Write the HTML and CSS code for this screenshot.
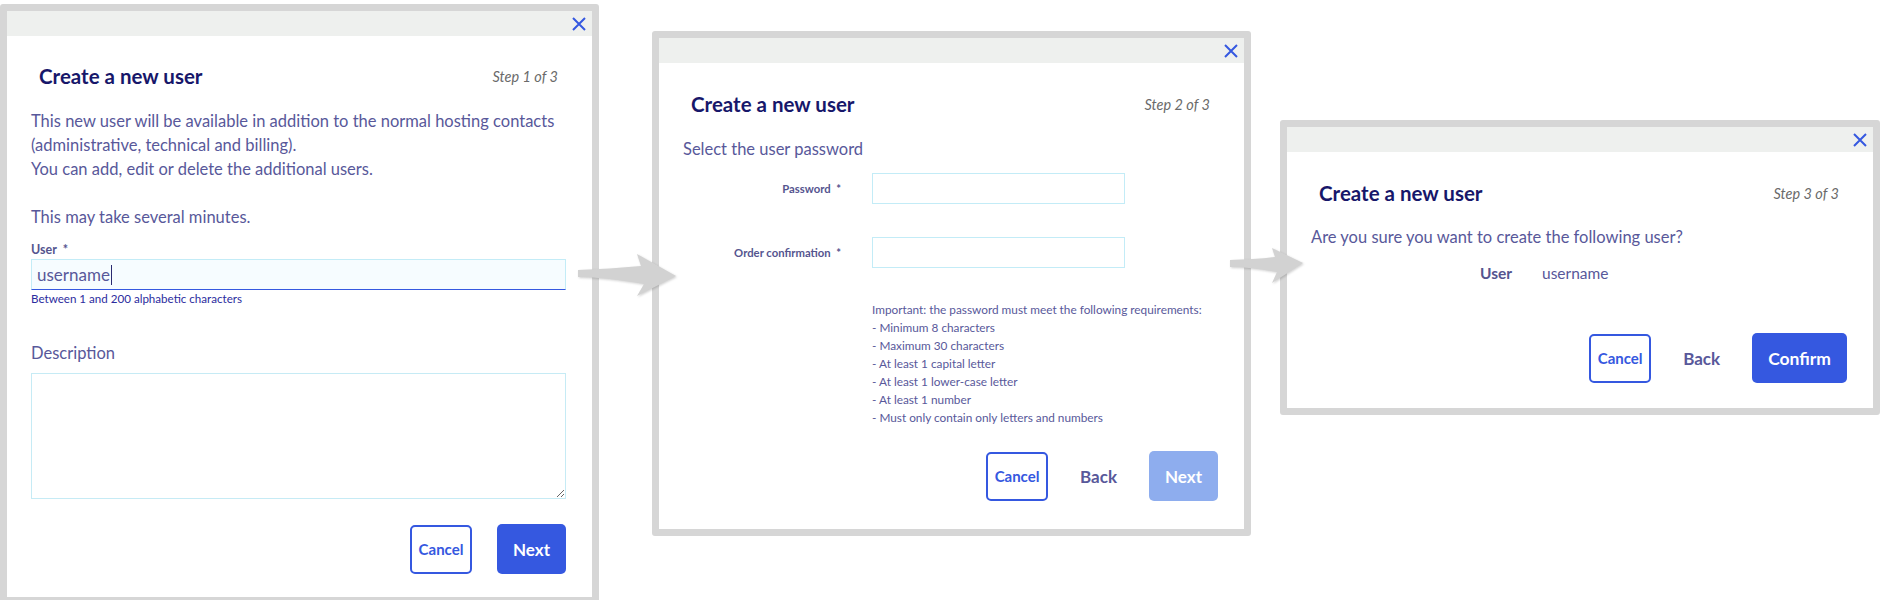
FILE: index.html
```html
<!DOCTYPE html>
<html lang="en">
<head>
<meta charset="utf-8">
<title>Create a new user</title>
<link rel="stylesheet" href="styles.css">
</head>
<body>
<div class="canvas">
  <section class="modal modal-1">
    <div class="modal-head">
      <svg class="close" viewBox="0 0 14 14" width="14" height="14"><path d="M1 1L13 13M13 1L1 13" stroke="#3558e0" stroke-width="2" fill="none"/></svg>
    </div>
    <div class="modal-body">
      <div class="title-row"><h2 class="title">Create a new user</h2><span class="step">Step 1 of 3</span></div>
      <p class="text intro">This new user will be available in addition to the normal hosting contacts<br>(administrative, technical and billing).<br>You can add, edit or delete the additional users.<br><br>This may take several minutes.</p>
      <div class="label-top">User&nbsp; *</div>
      <div class="input active"><span class="value">username</span><span class="caret"></span></div>
      <div class="helper">Between 1 and 200 alphabetic characters</div>
      <div class="text desc-label">Description</div>
      <textarea class="area"></textarea>
      <div class="actions a1">
        <button class="btn btn-outline">Cancel</button>
        <button class="btn btn-primary">Next</button>
      </div>
    </div>
  </section>

  <section class="modal modal-2">
    <div class="modal-head">
      <svg class="close" viewBox="0 0 14 14" width="14" height="14"><path d="M1 1L13 13M13 1L1 13" stroke="#3558e0" stroke-width="2" fill="none"/></svg>
    </div>
    <div class="modal-body">
      <div class="title-row"><h2 class="title">Create a new user</h2><span class="step">Step 2 of 3</span></div>
      <p class="text sub">Select the user password</p>
      <div class="form-row r1"><label class="label-side">Password&nbsp; *</label><div class="input small"></div></div>
      <div class="form-row r2"><label class="label-side">Order confirmation&nbsp; *</label><div class="input small"></div></div>
      <div class="rules">Important: the password must meet the following requirements:<br>- Minimum 8 characters<br>- Maximum 30 characters<br>- At least 1 capital letter<br>- At least 1 lower-case letter<br>- At least 1 number<br>- Must only contain only letters and numbers</div>
      <div class="actions a2">
        <button class="btn btn-outline">Cancel</button>
        <button class="btn btn-link">Back</button>
        <button class="btn btn-primary disabled">Next</button>
      </div>
    </div>
  </section>

  <section class="modal modal-3">
    <div class="modal-head">
      <svg class="close" viewBox="0 0 14 14" width="14" height="14"><path d="M1 1L13 13M13 1L1 13" stroke="#3558e0" stroke-width="2" fill="none"/></svg>
    </div>
    <div class="modal-body">
      <div class="title-row"><h2 class="title">Create a new user</h2><span class="step">Step 3 of 3</span></div>
      <p class="text sub3">Are you sure you want to create the following user?</p>
      <div class="summary"><span class="sum-label">User</span><span class="sum-value">username</span></div>
      <div class="actions a3">
        <button class="btn btn-outline">Cancel</button>
        <button class="btn btn-link">Back</button>
        <button class="btn btn-primary">Confirm</button>
      </div>
    </div>
  </section>

  <svg class="arrow arrow-1" viewBox="0 0 105 50" width="105" height="50"><path d="M3 20 C25 19 45 18 66 16 L62 4 L101 26 L62 46 L69 34 C45 30 22 27 3 27 Z"/></svg>
  <svg class="arrow arrow-2" viewBox="0 0 82 42" width="82" height="42"><path d="M5 15 C20 14 35 14 50 12 L47 3 L78 18 L47 38 L52 27 C35 24 20 22 5 22 Z"/></svg>
</div>
</body>
</html>
```
FILE: styles.css
```css
* { box-sizing: border-box; }
html, body { margin: 0; padding: 0; background: #ffffff; }
body {
  width: 1890px;
  height: 600px;
  overflow: hidden;
  font-family: Lato, "Open Sans", sans-serif;
  color: #58589a;
}
.canvas {
  position: relative;
  display: flex;
  align-items: flex-start;
  width: 1890px;
  height: 600px;
}
.modal {
  width: 599px;
  border: 7px solid #d6d6d6;
  border-radius: 3px;
  background: #fff;
  flex: none;
}
.modal-1 { margin-top: 4px; height: 600px; }
.modal-2 { margin-top: 31px; margin-left: 53px; }
.modal-3 { margin-top: 120px; margin-left: 29px; width: 600px; }

.modal-head {
  height: 25px;
  background: #eef0ee;
  display: flex;
  justify-content: flex-end;
  align-items: center;
  padding-right: 6px;
}
.close { display: block; }

.modal-body {
  padding: 28px 26px 0 24px;
}
.modal-2 .modal-body, .modal-3 .modal-body { padding-top: 29px; }

.title-row {
  display: flex;
  justify-content: space-between;
  align-items: center;
  height: 24px;
  padding: 0 8px;
}
.title {
  margin: 0;
  font-size: 20.5px;
  font-weight: 700;
  color: #17176a;
  line-height: 24px;
}
.step {
  font-style: italic;
  font-size: 14.5px;
  color: #6a6a6a;
}
.text {
  margin: 0;
  font-size: 16.5px;
  line-height: 24px;
  color: #58589a;
}
.intro { margin-top: 21px; }
.label-top {
  margin-top: 13px;
  font-size: 12.5px;
  font-weight: 700;
  line-height: 16px;
  color: #55558f;
}
.input {
  height: 31px;
  background: #f6fcff;
  border: 1px solid #c3ecf7;
  display: flex;
  align-items: center;
  padding-left: 5px;
}
.input.active {
  margin-top: 1px;
  border-bottom: 1px solid #3558e0;
}
.input .value {
  font-size: 17px;
  color: #58589a;
}
.caret {
  display: inline-block;
  width: 1px;
  height: 20px;
  background: #2a2a70;
  margin-left: 1px;
}
.helper {
  margin-top: 2px;
  font-size: 11.6px;
  line-height: 14px;
  color: #2c2c9e;
}
.desc-label { margin-top: 35px; }
.area {
  display: block;
  margin-top: 8px;
  width: 100%;
  height: 126px;
  border: 1px solid #c6ebf5;
  background: #fff;
  resize: vertical;
  font: inherit;
}
.actions {
  display: flex;
  justify-content: flex-end;
  align-items: center;
  gap: 25px;
}
.a1 { margin-top: 25px; }
.a2 { margin-top: 24px; padding-bottom: 28px; }
.a3 { margin-top: 50px; padding-bottom: 25px; }
.btn {
  font-family: Lato, "Open Sans", sans-serif;
  font-weight: 700;
  border-radius: 5px;
  cursor: pointer;
}
.btn-outline {
  width: 62px;
  height: 49px;
  border: 2px solid #3558e0;
  background: #fff;
  color: #3558e0;
  font-size: 15px;
  padding: 0;
}
.btn-primary {
  height: 50px;
  padding: 0 16px;
  border: none;
  background: #3558e0;
  color: #fff;
  font-size: 17px;
}
.modal-3 .btn-primary { padding: 0 16px; font-size: 17.5px; }
.btn-primary.disabled { background: #8eadee; }
.btn-link {
  height: 49px;
  border: none;
  background: transparent;
  color: #58589a;
  font-size: 17px;
  padding: 0 7px;
}

.sub { margin-top: 21px; }
.form-row {
  display: grid;
  grid-template-columns: 158px 253px;
  column-gap: 31px;
  align-items: center;
}
.r1 { margin-top: 12px; }
.r2 { margin-top: 33px; }
.label-side {
  text-align: right;
  font-size: 11.3px;
  font-weight: 700;
  color: #55558f;
}
.input.small { background: #fff; }
.rules {
  margin-top: 33px;
  margin-left: 189px;
  font-size: 11.8px;
  line-height: 18px;
  color: #58589a;
}

.sub3 { margin-top: 20px; }
.summary {
  margin-top: 14px;
  display: grid;
  grid-template-columns: 201px auto;
  column-gap: 30px;
  line-height: 20px;
}
.sum-label {
  text-align: right;
  font-weight: 700;
  font-size: 15.5px;
  color: #55558f;
}
.sum-value {
  font-size: 15.5px;
  color: #58589a;
}

.arrow {
  position: absolute;
  fill: #d2d2d2;
  filter: drop-shadow(1px 1px 1px rgba(0,0,0,0.18));
}
.arrow-1 { left: 575px; top: 250px; }
.arrow-2 { left: 1225px; top: 245px; }
```
